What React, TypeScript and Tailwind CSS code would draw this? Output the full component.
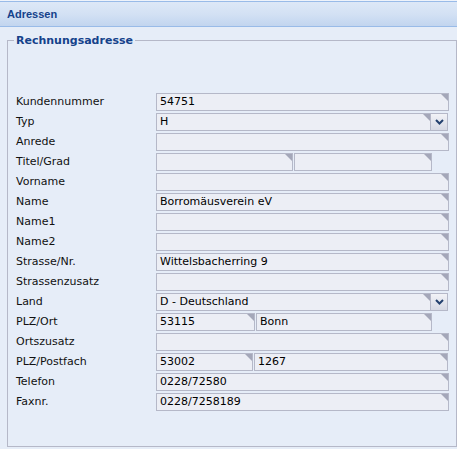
import React from "react";

type Part = { value?: string; w?: string };
type Row =
  | { label: string; kind: "text"; value?: string }
  | { label: string; kind: "select"; value: string }
  | { label: string; kind: "split"; parts: Part[] };

const rows: Row[] = [
  { label: "Kundennummer", kind: "text", value: "54751" },
  { label: "Typ", kind: "select", value: "H" },
  { label: "Anrede", kind: "text" },
  { label: "Titel/Grad", kind: "split", parts: [{ w: "w-[137px]" }, { w: "w-[138px]" }] },
  { label: "Vorname", kind: "text" },
  { label: "Name", kind: "text", value: "Borromäusverein eV" },
  { label: "Name1", kind: "text" },
  { label: "Name2", kind: "text" },
  { label: "Strasse/Nr.", kind: "text", value: "Wittelsbacherring 9" },
  { label: "Strassenzusatz", kind: "text" },
  { label: "Land", kind: "select", value: "D - Deutschland" },
  { label: "PLZ/Ort", kind: "split", parts: [{ value: "53115", w: "w-[99px]" }, { value: "Bonn", w: "w-[176px]" }] },
  { label: "Ortszusatz", kind: "text" },
  { label: "PLZ/Postfach", kind: "split", parts: [{ value: "53002", w: "w-[97px]" }, { value: "1267", w: "w-[194px]" }] },
  { label: "Telefon", kind: "text", value: "0228/72580" },
  { label: "Faxnr.", kind: "text", value: "0228/7258189" },
];

function Field({ value, className = "" }: { value?: string; className?: string }) {
  return (
    <div
      className={`relative h-[18px] border border-[#b5b8c8] bg-[#eceef5] pl-[3px] text-[11px] leading-[16px] text-black whitespace-nowrap overflow-hidden ${className}`}
    >
      {value}
      <span className="absolute top-0 right-0 w-[7px] h-[7px] bg-[#a4a7b9] [clip-path:polygon(0_0,100%_0,100%_100%)]" />
    </div>
  );
}

function Select({ value }: { value: string }) {
  return (
    <div className="flex w-[292px]">
      <Field value={value} className="w-[275px]" />
      <div className="h-[18px] w-[17px] border border-l-0 border-[#b5b8c8] bg-gradient-to-b from-[#f2f3f7] to-[#d6d9e4] flex items-center justify-center">
        <svg width="9" height="6" viewBox="0 0 9 6">
          <path d="M1 1 L4.5 4.5 L8 1" fill="none" stroke="#23416f" strokeWidth="2" />
        </svg>
      </div>
    </div>
  );
}

export default function App() {
  return (
    <div className="w-[457px] h-[449px] overflow-hidden bg-[#e6edf8] font-['DejaVu_Sans',sans-serif]">
      {/* Panel header */}
      <div className="pt-px bg-[#eef3fb]">
        <div className="h-[26px] border-t border-b border-[#99bbe8] bg-gradient-to-b from-[#dde8f7] via-[#d3e1f4] to-[#c2d5ef] pl-[7px] flex items-center">
          <span className="font-['Liberation_Sans',sans-serif] font-bold text-[11px] text-[#15428b]">Adressen</span>
        </div>
      </div>

      {/* Fieldset */}
      <fieldset className="ml-[7px] mt-[7px] w-[450px] h-[413px] border border-[#b5b8c8] px-[6px]">
        <legend className="px-[2px] text-[11px] leading-[13px] font-bold text-[#15428b]">Rechnungsadresse</legend>
        <div className="pl-[2px] pr-[1px] pt-[46px] flex flex-col">
          {rows.map((r) => (
            <div key={r.label} className="flex h-[20px] items-start">
              <div className="w-[140px] shrink-0 text-[11px] leading-[18px] text-[#111]">{r.label}</div>
              {r.kind === "text" && <Field value={r.value} className="flex-1" />}
              {r.kind === "select" && <Select value={r.value} />}
              {r.kind === "split" && (
                <div className="flex gap-px">
                  {r.parts.map((p, i) => (
                    <Field key={i} value={p.value} className={p.w} />
                  ))}
                </div>
              )}
            </div>
          ))}
        </div>
      </fieldset>
    </div>
  );
}
